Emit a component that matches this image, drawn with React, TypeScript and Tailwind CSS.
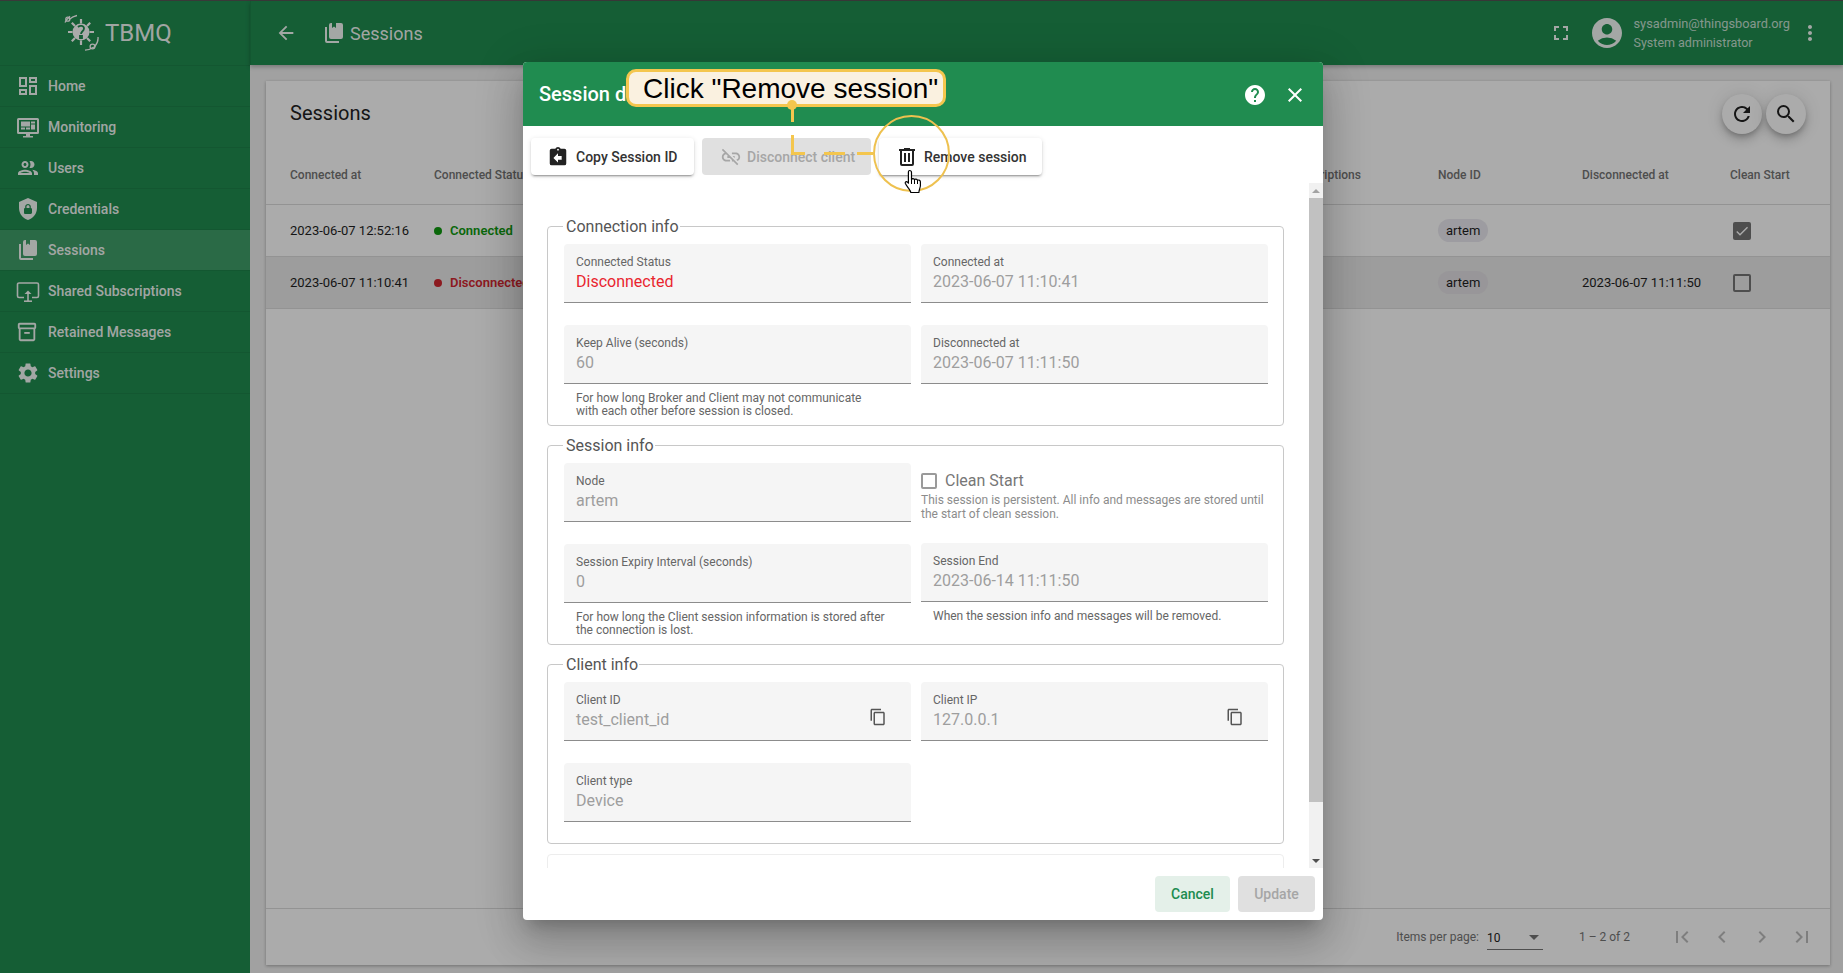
import React from "react";
import {
  MdOutlineDashboard, MdOutlinePeople, MdSettings, MdOutlineInventory2, MdArrowBack, MdFullscreen,
  MdAccountCircle, MdMoreVert, MdRefresh, MdSearch, MdHelp, MdClose, MdLinkOff, MdContentCopy,
  MdFirstPage, MdLastPage, MdChevronLeft, MdChevronRight, MdCheck,
} from "react-icons/md";

const Mdi = ({ d, size = 24, className = "" }: { d: string; size?: number; className?: string }) => (
  <svg width={size} height={size} viewBox="0 0 24 24" fill="currentColor" className={className}><path d={d} /></svg>
);
const BOOKS = "M19,18H9A2,2 0 0,1 7,16V4A2,2 0 0,1 9,2H10V7L12,5.5L14,7V2H19A2,2 0 0,1 21,4V16A2,2 0 0,1 19,18M17,20V22H5A2,2 0 0,1 3,20V6H5V20H17Z";
const SHIELD = "M12,1L3,5V11C3,16.55 6.84,21.74 12,23C17.16,21.74 21,16.55 21,11V5L12,1M12,7C13.4,7 14.8,8.1 14.8,9.5V11C15.4,11 16,11.6 16,12.3V15.8C16,16.4 15.4,17 14.7,17H9.2C8.6,17 8,16.4 8,15.7V12.2C8,11.6 8.6,11 9.2,11V9.5C9.2,8.1 10.6,7 12,7M12,8.2C11.2,8.2 10.5,8.7 10.5,9.5V11H13.5V9.5C13.5,8.7 12.8,8.2 12,8.2Z";
const CLIP = "M19,3H14.82C14.4,1.84 13.3,1 12,1C10.7,1 9.6,1.84 9.18,3H5A2,2 0 0,0 3,5V19A2,2 0 0,0 5,21H19A2,2 0 0,0 21,19V5A2,2 0 0,0 19,3M12,3A1,1 0 0,1 13,4A1,1 0 0,1 12,5A1,1 0 0,1 11,4A1,1 0 0,1 12,3M16,15H12V18L7,13L12,8V11H16V15Z";
const TRASH = "M9,3V4H4V6H5V19A2,2 0 0,0 7,21H17A2,2 0 0,0 19,19V6H20V4H15V3H9M7,6H17V19H7V6M9,8V17H11V8H9M13,8V17H15V8H13Z";

const MonitorDash = () => (
  <svg width={24} height={24} viewBox="0 0 24 24" fill="currentColor">
    <path d="M2.5 3h19A1.5 1.5 0 0 1 23 4.5v13a1.5 1.5 0 0 1-1.5 1.5H14v2h3v1.5H7V21h3v-2H2.5A1.5 1.5 0 0 1 1 17.5v-13A1.5 1.5 0 0 1 2.5 3zM3 5v12h18V5H3z" />
    <path d="M5 6.5h9v5H5zM15 6.5h4v2h-4zM15 9.5h4v5h-4zM5 12.5h4v2H5zM10 12.5h4v2h-4z" />
  </svg>
);
const MonitorUp = () => (
  <svg width={24} height={24} viewBox="0 0 24 24" fill="none" stroke="currentColor" strokeWidth={1.6}>
    <path d="M8 18.5H3a1.5 1.5 0 0 1-1.5-1.5V5.5A1.5 1.5 0 0 1 3 4h18a1.5 1.5 0 0 1 1.5 1.5V17a1.5 1.5 0 0 1-1.5 1.5h-5" />
    <path d="M12 22v-9" />
    <path d="M8 22.2h8" />
    <path d="M8.5 15l3.5-3.5 3.5 3.5z" fill="currentColor" stroke="none" />
  </svg>
);
const Logo = () => (
  <svg width={36} height={38} viewBox="0 0 36 38" className="text-white">
    <circle cx="18" cy="18" r="8.5" fill="currentColor" />
    <g stroke="currentColor" fill="none" strokeWidth="1.3">
      <path d="M7 2.2C5 4 3 6 2 8.500M6 5.500c3-2.500 5-3.500 8-4" />
      <circle cx="4.800" cy="5.200" r="2" />
      <path d="M35 23c.5 4-1 7-3.500 10M31 33c-3 2-6 3-9 3.200" />
      <circle cx="29.500" cy="32.500" r="2.400" />
      <g strokeWidth="2.200"><path d="M18 9.500V5M18 31v-4.500M9.500 18H5M31 18h-4.500M12 12 8.800 8.800M27.200 27.200 24 24M12 24l-3.200 3.200M27.200 8.800 24 12" /></g>
    </g>
    <path d="M15 13c2-2 6-1.500 6 1.500 0 2.500-3 3-3 5.500M17 22h2v2h-2z" stroke="#208c50" strokeWidth="1.800" fill="none" />
  </svg>
);
const Hand = () => (
  <svg width={20} height={25} viewBox="0 0 20 25">
    <path d="M5.500 1.500c1.300 0 2 .8 2 2v7c.3-1 2.800-1.200 3 .3.400-1 2.700-.9 3 .6.600-.7 2.700-.5 2.900 1.300.2 2 .1 5.300-.9 7.800-.3.800-.5 1.500-.6 3H6.800c-.2-1.700-1.200-2.800-2.300-4.300-1.300-1.800-2.700-3.500-3.200-4.900-.4-1.300 1-2.200 2.200-1.100l.9 1V3.500c0-1.200.5-2 1.100-2z" fill="#fff" stroke="#000" strokeWidth="1.200" strokeLinejoin="round" />
    <path d="M7.500 10.500v4.500M10.500 11v4M13.500 11.500v3.500" stroke="#000" strokeWidth="1" fill="none" />
  </svg>
);

const navItems: [React.ReactNode, string, boolean?][] = [
  [<MdOutlineDashboard size={24} />, "Home"],
  [<MonitorDash />, "Monitoring"],
  [<MdOutlinePeople size={24} />, "Users"],
  [<Mdi d={SHIELD} />, "Credentials"],
  [<Mdi d={BOOKS} />, "Sessions", true],
  [<MonitorUp />, "Shared Subscriptions"],
  [<MdOutlineInventory2 size={22} />, "Retained Messages"],
  [<MdSettings size={24} />, "Settings"],
];

const Sidebar = () => (
  <aside className="w-[250px] shrink-0 bg-[#208c50] flex flex-col">
    <div className="h-[65px] flex items-center pl-[63px] gap-[6px] border-b border-[#1d824a] shrink-0">
      <Logo />
      <span className="text-[24px] text-white/95 leading-none">TBMQ</span>
    </div>
    {navItems.map(([icon, label, active]) => (
      <div key={label} className={`h-[41px] flex items-center border-b border-[#1d824a] text-white/95 ${active ? "bg-[#3f9e69]" : ""}`}>
        <span className="w-[48px] pl-[16px] flex items-center">{icon}</span>
        <span className="text-[14px] font-medium">{label}</span>
      </div>
    ))}
  </aside>
);

const Header = () => (
  <header className="h-[64px] shrink-0 bg-[#208c50] flex items-center text-white/95 border-l border-[#1d824a] shadow-[0_2px_4px_rgba(0,0,0,0.25)] relative">
    <span className="ml-[24px]"><MdArrowBack size={22} /></span>
    <span className="ml-[25px]"><Mdi d={BOOKS} /></span>
    <span className="ml-[4px] text-[18px] mt-px">Sessions</span>
    <div className="ml-auto flex items-center">
      <MdFullscreen size={24} />
      <span className="ml-[16px]"><MdAccountCircle size={36} /></span>
      <div className="ml-[9px] flex flex-col text-[12.8px] leading-[19px] text-white/75">
        <span>sysadmin@thingsboard.org</span>
        <span className="text-[12.5px]">System administrator</span>
      </div>
      <span className="ml-[8px] mr-[21px]"><MdMoreVert size={24} /></span>
    </div>
  </header>
);

const cols = "grid grid-cols-[144px_856px_148px_144px_148px_1fr]";

const Row = ({ at, status, color, end, checked, selected }: { at: string; status: string; color: string; end: string; checked: boolean; selected?: boolean }) => (
  <div className={`${cols} h-[52px] items-center pl-[24px] border-b border-[#dcdcdc] text-[13px] text-[#1f1f1f] ${selected ? "bg-[#eaeaea]" : "bg-white"}`}>
    <span>{at}</span>
    <span className={`flex items-center font-semibold ${color}`}>
      <span className="w-[8px] h-[8px] rounded-full bg-current mr-[8px] mt-px" />
      {status}
    </span>
    <span />
    <span><span className={`inline-flex items-center h-[23px] px-[8px] rounded-full ${selected ? "bg-[#e3e0e4]" : "bg-[#ebe9f0]"}`}>artem</span></span>
    <span>{end}</span>
    <span className="pl-[3px]">
      {checked ? (
        <span className="w-[18px] h-[18px] rounded-[2px] bg-[#757575] flex items-center justify-center text-white"><MdCheck size={16} /></span>
      ) : (
        <span className="block w-[18px] h-[18px] rounded-[2px] border-2 border-[#757575]" />
      )}
    </span>
  </div>
);

const RoundBtn = ({ children }: { children: React.ReactNode }) => (
  <span className="w-[40px] h-[40px] rounded-full bg-white flex items-center justify-center text-[#222] shadow-[0_3px_5px_-1px_rgba(0,0,0,0.2),0_6px_10px_rgba(0,0,0,0.14),0_1px_18px_rgba(0,0,0,0.12)]">{children}</span>
);

const Main = () => (
  <main className="flex-1 bg-[#f0f0f0] pt-[16px] pl-[16px] pr-[13px] pb-[8px] flex min-h-0">
    <section className="flex-1 bg-white flex flex-col shadow-[0_1px_3px_rgba(0,0,0,0.3)]">
      <div className="h-[64px] flex items-center pl-[24px] pr-[24px] shrink-0">
        <h1 className="text-[20px] text-[#222] font-normal">Sessions</h1>
        <div className="ml-auto flex gap-[4px] mt-[1px]">
          <RoundBtn><MdRefresh size={24} /></RoundBtn>
          <RoundBtn><MdSearch size={24} /></RoundBtn>
        </div>
      </div>
      <div className={`${cols} h-[60px] items-center pl-[24px] border-b border-[#dcdcdc] text-[12px] font-medium text-[#757575] shrink-0`}>
        <span>Connected at</span>
        <span>Connected Status</span>
        <span className="-ml-[3px]">Subscriptions</span>
        <span>Node ID</span>
        <span>Disconnected at</span>
        <span>Clean Start</span>
      </div>
      <Row at="2023-06-07 12:52:16" status="Connected" color="text-[#0f9a10]" end="" checked />
      <Row at="2023-06-07 11:10:41" status="Disconnected" color="text-[#d12730]" end="2023-06-07 11:11:50" checked={false} selected />
      <div className="flex-1" />
      <div className="h-[57px] shrink-0 border-t border-[#dcdcdc] flex items-center text-[12px] text-[#757575] pr-[16px]">
        <span className="ml-auto">Items per page:</span>
        <span className="ml-[8px] w-[56px] h-[24px] border-b border-[#757575] text-[#222] flex items-center justify-between relative top-[1px] pr-[4px]">
          10
          <span className="w-0 h-0 border-x-[5px] border-x-transparent border-t-[5px] border-t-[#757575]" />
        </span>
        <span className="ml-[36px]">1 – 2 of 2</span>
        <span className="ml-[40px] flex gap-[16px] text-[#bdbdbd]">
          <MdFirstPage size={24} /><MdChevronLeft size={24} /><MdChevronRight size={24} /><MdLastPage size={24} />
        </span>
      </div>
    </section>
  </main>
);

const Field = ({ label, value, valueClass = "text-[#9e9e9e]", icon, className = "" }: { label: string; value: string; valueClass?: string; icon?: boolean; className?: string }) => (
  <div className={`h-[59px] bg-[#f5f5f5] rounded-t-[4px] border-b border-[#8c8c8c] pl-[12px] pr-[24px] pt-[11px] flex items-start justify-between ${className}`}>
    <div className="flex flex-col">
      <span className="text-[12px] leading-[14px] text-[#666]">{label}</span>
      <span className={`text-[16px] leading-[20px] mt-[3px] ${valueClass}`}>{value}</span>
    </div>
    {icon && <span className="mt-[15px] text-[#555]"><MdContentCopy size={18} /></span>}
  </div>
);

const Help = ({ children, className = "" }: { children: React.ReactNode; className?: string }) => (
  <p className={`text-[12px] leading-[13px] text-[#666] pl-[12px] ${className}`}>{children}</p>
);

const Box = ({ title, children, className = "" }: { title: string; children: React.ReactNode; className?: string }) => (
  <fieldset className={`border border-[#c8c8c8] rounded-[4px] pl-[16px] pr-[15px] ${className}`}>
    <legend className="-ml-px pl-[3px] pr-[1px] text-[16px] leading-[19px] text-[#555]">{title}</legend>
    {children}
  </fieldset>
);

const Grid = ({ children }: { children: React.ReactNode }) => (
  <div className="grid grid-cols-[347px_347px] gap-x-[10px] gap-y-[22px] mt-[8px]">{children}</div>
);

const DialogBtn = ({ children, disabled, className = "" }: { children: React.ReactNode; disabled?: boolean; className?: string }) => (
  <span className={`h-[37px] rounded-[4px] flex items-center text-[14px] font-medium ${disabled ? "bg-[#e0e0e0] text-[#a6a6a6]" : "bg-white text-[#333] shadow-[0_3px_1px_-2px_rgba(0,0,0,0.2),0_2px_2px_rgba(0,0,0,0.14),0_1px_5px_rgba(0,0,0,0.12)]"} ${className}`}>{children}</span>
);

const Dialog = () => (
  <div className="absolute left-[523px] top-[62px] w-[800px] h-[858px] bg-white rounded-[4px] flex flex-col overflow-hidden shadow-[0_11px_15px_-7px_rgba(0,0,0,0.2),0_24px_38px_3px_rgba(0,0,0,0.14),0_9px_46px_8px_rgba(0,0,0,0.12)]">
    <div className="h-[64px] shrink-0 bg-[#208c50] text-white flex items-center pl-[16px] pr-[16px]">
      <span className="text-[20px] font-medium">Session details</span>
      <span className="ml-auto mt-[2px]"><MdHelp size={24} /></span>
      <span className="ml-[16px] mt-[2px]"><MdClose size={24} /></span>
    </div>
    <div className="h-[57px] shrink-0 flex gap-[8px] pl-[8px] pt-[12px]">
      <DialogBtn className="w-[163px] pl-[16px] gap-[7px]"><Mdi d={CLIP} size={22} className="text-[#222]" /><span className="mt-px">Copy Session ID</span></DialogBtn>
      <DialogBtn className="w-[169px] pl-[18px] gap-[5px]" disabled><MdLinkOff size={22} /><span className="mt-px">Disconnect client</span></DialogBtn>
      <DialogBtn className="w-[163px] pl-[16px] gap-[5px]"><Mdi d={TRASH} size={24} className="text-[#222]" /><span className="mt-px">Remove session</span></DialogBtn>
    </div>
    <div className="flex-1 min-h-0 flex">
      <div className="flex-1 min-w-0 overflow-hidden pt-[34px] pl-[24px] pr-[25px]">
        <Box title="Connection info" className="pb-[7px]">
          <Grid>
            <Field label="Connected Status" value="Disconnected" valueClass="text-[#e9252f]" />
            <Field label="Connected at" value="2023-06-07 11:10:41" />
            <div>
              <Field label="Keep Alive (seconds)" value="60" />
              <Help className="mt-[8px]">For how long Broker and Client may not communicate<br />with each other before session is closed.</Help>
            </div>
            <Field label="Disconnected at" value="2023-06-07 11:11:50" />
          </Grid>
        </Box>
        <Box title="Session info" className="mt-[10px] pb-[7px]">
          <Grid>
            <Field label="Node" value="artem" />
            <div className="flex flex-col">
              <label className="flex items-center h-[20px] mt-[8px] text-[16px] text-[#777]">
                <span className="w-[16px] h-[16px] border-2 border-[#9a9a9a] rounded-[2px] mr-[8px]" />
                Clean Start
              </label>
              <p className="text-[12px] leading-[14px] text-[#8c8c8c] mt-[2px]">This session is persistent. All info and messages are stored until the start of clean session.</p>
            </div>
            <div>
              <Field label="Session Expiry Interval (seconds)" value="0" />
              <Help className="mt-[8px]">For how long the Client session information is stored after<br />the connection is lost.</Help>
            </div>
            <div className="-mt-px">
              <Field label="Session End" value="2023-06-14 11:11:50" />
              <Help className="mt-[8px]">When the session info and messages will be removed.</Help>
            </div>
          </Grid>
        </Box>
        <Box title="Client info" className="mt-[10px] pb-[21px]">
          <Grid>
            <Field label="Client ID" value="test_client_id" icon />
            <Field label="Client IP" value="127.0.0.1" icon />
            <Field label="Client type" value="Device" />
          </Grid>
        </Box>
        <div className="mt-[10px] h-[40px] border border-[#ededed] rounded-[4px]" />
      </div>
      <div className="w-[14px] shrink-0 bg-[#f1f1f1] flex flex-col items-center">
        <span className="h-[15px] flex items-center"><span className="w-0 h-0 border-x-[4px] border-x-transparent border-b-[4px] border-b-[#a3a3a3]" /></span>
        <span className="w-full h-[604px] bg-[#c1c1c1]" />
        <span className="mt-auto h-[15px] flex items-center"><span className="w-0 h-0 border-x-[4px] border-x-transparent border-t-[4px] border-t-[#505050]" /></span>
      </div>
    </div>
    <div className="h-[52px] shrink-0 flex justify-end gap-[8px] pt-[8px] pr-[8px]">
      <span className="w-[75px] h-[36px] rounded-[4px] bg-[#e4f0e9] text-[#208c50] text-[14px] font-medium flex items-center justify-center">Cancel</span>
      <span className="w-[77px] h-[36px] rounded-[4px] bg-[#e0e0e0] text-[#a6a6a6] text-[14px] font-medium flex items-center justify-center">Update</span>
    </div>
  </div>
);

const Callout = () => (
  <>
    <div className="absolute left-[626px] top-[69px] w-[320px] h-[38px] rounded-[10px] bg-[#faf1e0] border-[3px] border-[#f4c64e] pl-[14px] text-[28px] leading-[33px] text-black whitespace-nowrap [font-family:'Liberation_Sans',sans-serif]">Click "Remove session"</div>
    <div className="absolute left-[787px] top-[100px] w-[10px] h-[10px] rounded-full bg-[#f4c64e]" />
    <div className="absolute left-[791px] top-[107px] w-[3px] h-[15px] bg-[#f4c64e]" />
    <div className="absolute left-[791px] top-[135px] w-[3px] h-[20px] bg-[#f4c64e]" />
    <div className="absolute left-[791px] top-[152px] w-[14px] h-[3px] bg-[#f4c64e]" />
    <div className="absolute left-[824px] top-[152px] w-[21px] h-[3px] bg-[#f4c64e]" />
    <div className="absolute left-[857px] top-[152px] w-[16px] h-[3px] bg-[#f4c64e]" />
    <div className="absolute left-[873px] top-[115px] w-[77px] h-[77px] rounded-full border-[2px] border-[#eec14f]" />
    <div className="absolute left-[904px] top-[169px]"><Hand /></div>
  </>
);

export default function App() {
  return (
    <div className="relative w-full h-[973px] overflow-hidden [font-family:Roboto,sans-serif]">
      <div className="h-px bg-[#555]" />
      <div className="flex h-[972px]">
        <Sidebar />
        <div className="flex-1 flex flex-col min-w-0">
          <Header />
          <Main />
        </div>
      </div>
      <div className="absolute inset-0 bg-black/[0.33]" />
      <Dialog />
      <Callout />
    </div>
  );
}
